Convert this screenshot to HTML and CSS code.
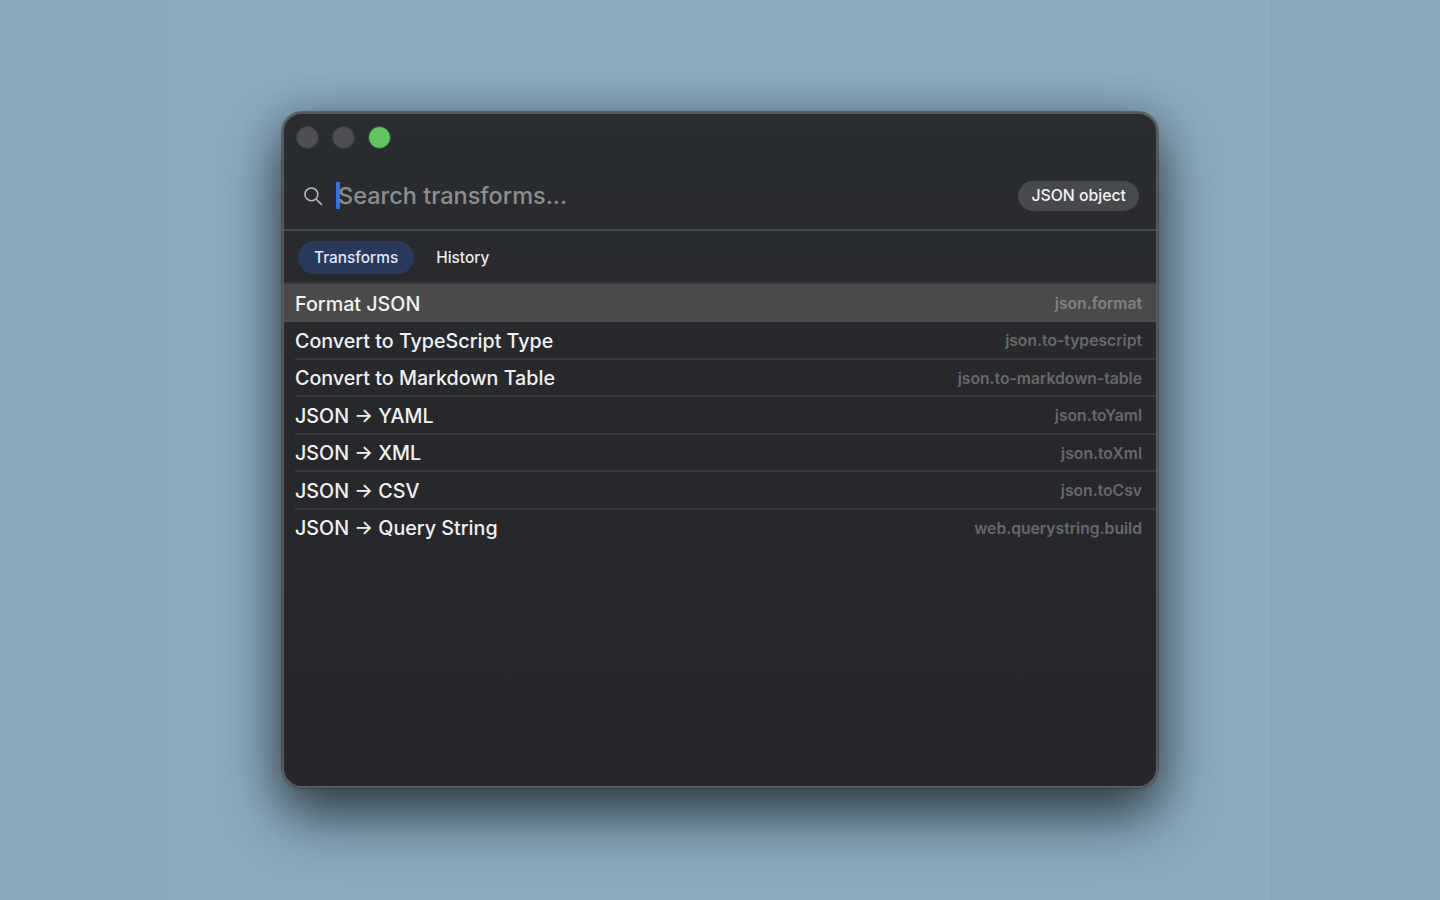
FILE: index.html
```html
<!DOCTYPE html>
<html lang="en">
<head>
<meta charset="utf-8">
<title>Transforms</title>
<link rel="stylesheet" href="styles.css">
</head>
<body>
<main class="window">
  <div class="titlebar">
    <span class="light"></span>
    <span class="light"></span>
    <span class="light light-green"></span>
  </div>
  <div class="search">
    <svg class="search-icon" width="20" height="20" viewBox="0 0 20 20" fill="none" stroke="#b4b6b8" stroke-width="1.4" stroke-linecap="round"><circle cx="8.4" cy="8.4" r="6.4"/><path d="M13.2 13.2L18.4 18.4"/></svg>
    <span class="caret"></span>
    <span class="placeholder">Search transforms...</span>
    <span class="badge">JSON object</span>
  </div>
  <nav class="tabs">
    <span class="tab tab-active">Transforms</span>
    <span class="tab">History</span>
  </nav>
  <ul class="list">
    <li class="row row-selected"><span class="name">Format JSON</span><span class="id">json.format</span></li>
    <li class="row"><span class="name">Convert to TypeScript Type</span><span class="id">json.to-typescript</span></li>
    <li class="row"><span class="name">Convert to Markdown Table</span><span class="id">json.to-markdown-table</span></li>
    <li class="row"><span class="name">JSON → YAML</span><span class="id">json.toYaml</span></li>
    <li class="row"><span class="name">JSON → XML</span><span class="id">json.toXml</span></li>
    <li class="row"><span class="name">JSON → CSV</span><span class="id">json.toCsv</span></li>
    <li class="row"><span class="name">JSON → Query String</span><span class="id">web.querystring.build</span></li>
  </ul>
</main>
</body>
</html>
```
FILE: styles.css
```css
* { box-sizing: border-box; }
html, body { height: 100%; }
body {
  margin: 0;
  display: flex;
  align-items: center;
  justify-content: center;
  background: linear-gradient(90deg, #8ba9bb 0, #8ba9bb 170px, #8dabbe 170px, #8dabbe 1270px, #8ba8bb 1270px, #8ba8bb 100%);
  font-family: Inter, "Noto Sans", sans-serif;
  overflow: hidden;
}
.window {
  width: 876px;
  height: 676px;
  display: flex;
  flex-direction: column;
  background: linear-gradient(180deg, #2a2d30 0, #27282c 300px, #26272b 100%);
  border: 2px solid #57595b;
  border-radius: 20px;
  box-shadow: 0 0 0 1px rgba(40,44,48,.45), 0 28px 60px rgba(20,30,36,.72), 0 6px 40px rgba(20,30,36,.32);
  overflow: hidden;
  color: #f2f2f2;
}
.titlebar {
  flex: none;
  height: 47px;
  display: flex;
  align-items: center;
  gap: 13px;
  padding: 0 0 0 12px;
}
.light {
  width: 23px;
  height: 23px;
  border-radius: 50%;
  background: #4d4f52;
  border: 1px solid #3a3c3f;
}
.light-green { background: #62c65f; border-color: #2d4a30; }
.search {
  flex: none;
  height: 70px;
  padding: 0 17px 0 19px;
  display: flex;
  align-items: center;
  border-bottom: 2px solid #47494b;
}
.search-icon { flex: none; margin-top: 2px; stroke-width: 1.6; }
.caret {
  flex: none;
  width: 4px;
  height: 27px;
  margin-left: 13px;
  background: #2f72f0;
  border-radius: 1px;
}
.placeholder {
  flex: 1;
  margin-left: -2px;
  font-size: 23.5px;
  font-weight: 450;
  color: #8d8e90;
}
.badge {
  flex: none;
  height: 30px;
  margin-top: 2px;
  line-height: 30px;
  padding: 0 13px;
  border-radius: 15px;
  background: #47494c;
  color: #f2f2f2;
  font-size: 15.8px;
  font-weight: 500;
}
.tabs {
  flex: none;
  height: 53px;
  padding: 2px 0 0 14px;
  display: flex;
  align-items: center;
  gap: 6px;
  border-bottom: 2px solid #37393b;
}
.tab {
  height: 33px;
  line-height: 33px;
  padding: 0 16px;
  border-radius: 17px;
  font-size: 15.4px;
  font-weight: 500;
  color: #ececec;
}
.tab-active { background: #283a5c; color: #dfe8f6; }
.list { list-style: none; margin: 0; padding: 0; }
.row {
  height: 37.5px;
  margin-left: 11px;
  padding: 2px 14px 0 0;
  display: flex;
  align-items: center;
  justify-content: space-between;
  border-bottom: 2px solid #37393c;
}
.row:last-child { border-bottom-color: transparent; }
.row-selected {
  height: 38px;
  margin-left: 0;
  padding: 1px 14px 0 11px;
  background: #4a4a4a;
  border-bottom: 0;
}
.name { font-size: 19.7px; font-weight: 450; color: #f1f1f1; }
.id { font-size: 15.7px; font-weight: 600; color: #67686b; }
.row-selected .id { color: #818181; }
```
